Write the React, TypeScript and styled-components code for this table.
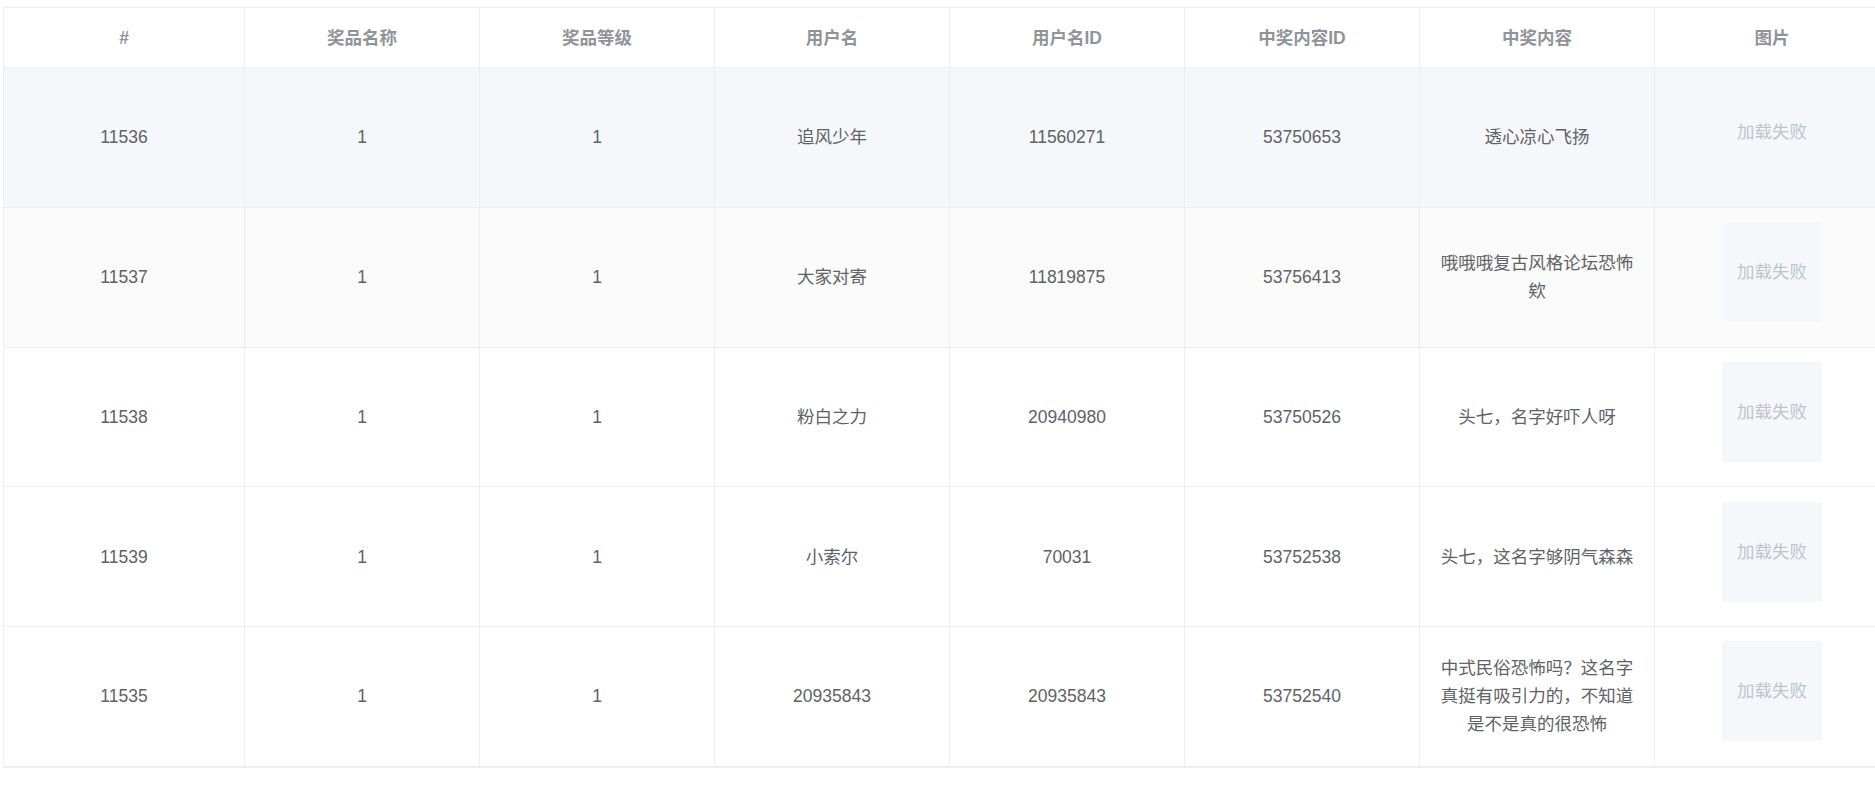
import React from "react";
import styled, { createGlobalStyle } from "styled-components";

const GlobalStyle = createGlobalStyle`
  html, body {
    margin: 0;
    padding: 0;
    background: #ffffff;
    font-family: "Liberation Sans", "Noto Sans CJK SC", sans-serif;
  }
  #root {
    width: 100vw;
    overflow: hidden;
  }
`;

const Page = styled.div`
  padding: 7px 0 0 3px;
  width: 100%;
  overflow: hidden;
  box-sizing: border-box;
`;

const Table = styled.div`
  display: flex;
  flex-direction: column;
  width: max-content;
  border-left: 1px solid #ebeef5;
  border-top: 1px solid #ebeef5;
  border-bottom: 1px solid #ebeef5;
  font-family: "Liberation Sans", "Noto Sans CJK SC", sans-serif;
  font-size: 17.5px;
`;

const Row = styled.div<{ $bg?: string; $h: number }>`
  display: grid;
  grid-template-columns: 241px repeat(7, 235px);
  height: ${(p) => p.$h}px;
  box-sizing: border-box;
  border-bottom: 1px solid #ebeef5;
  background: ${(p) => p.$bg || "#ffffff"};
`;

const HeaderCell = styled.div`
  display: flex;
  align-items: center;
  justify-content: center;
  box-sizing: border-box;
  border-right: 1px solid #ebeef5;
  color: #909399;
  font-weight: bold;
  line-height: 28px;
  padding: 0 13px;
`;

const Cell = styled.div`
  display: flex;
  align-items: center;
  justify-content: center;
  box-sizing: border-box;
  border-right: 1px solid #ebeef5;
  color: #606266;
  line-height: 28px;
  text-align: center;
  padding: 0 13px;
  word-break: break-all;
`;

const ImageCell = styled(Cell)`
  padding-bottom: 10px;
`;

const ImagePlaceholder = styled.div`
  width: 100px;
  height: 100px;
  background: #f5f7fa;
  color: #c0c4cc;
  font-size: 17.5px;
  display: flex;
  align-items: center;
  justify-content: center;
`;

const headers = ["#", "奖品名称", "奖品等级", "用户名", "用户名ID", "中奖内容ID", "中奖内容", "图片"];

type Item = {
  id: string;
  name: string;
  level: string;
  user: string;
  userId: string;
  contentId: string;
  content: string;
};

const rows: Item[] = [
  { id: "11536", name: "1", level: "1", user: "追风少年", userId: "11560271", contentId: "53750653", content: "透心凉心飞扬" },
  { id: "11537", name: "1", level: "1", user: "大家对寄", userId: "11819875", contentId: "53756413", content: "哦哦哦复古风格论坛恐怖欸" },
  { id: "11538", name: "1", level: "1", user: "粉白之力", userId: "20940980", contentId: "53750526", content: "头七，名字好吓人呀" },
  { id: "11539", name: "1", level: "1", user: "小索尔", userId: "70031", contentId: "53752538", content: "头七，这名字够阴气森森" },
  {
    id: "11535",
    name: "1",
    level: "1",
    user: "20935843",
    userId: "20935843",
    contentId: "53752540",
    content: "中式民俗恐怖吗？这名字真挺有吸引力的，不知道是不是真的很恐怖",
  },
];

const rowBg = ["#f5f7fa", "#fafafa", "#ffffff", "#ffffff", "#ffffff"];

export default function App() {
  return (
    <>
      <GlobalStyle />
      <Page>
        <Table>
          <Row $h={60}>
            {headers.map((h) => (
              <HeaderCell key={h}>{h}</HeaderCell>
            ))}
          </Row>
          {rows.map((r, i) => (
            <Row key={r.id} $h={139.75} $bg={rowBg[i]}>
              <Cell>{r.id}</Cell>
              <Cell>{r.name}</Cell>
              <Cell>{r.level}</Cell>
              <Cell>{r.user}</Cell>
              <Cell>{r.userId}</Cell>
              <Cell>{r.contentId}</Cell>
              <Cell>{r.content}</Cell>
              <ImageCell>
                <ImagePlaceholder>加载失败</ImagePlaceholder>
              </ImageCell>
            </Row>
          ))}
        </Table>
      </Page>
    </>
  );
}
